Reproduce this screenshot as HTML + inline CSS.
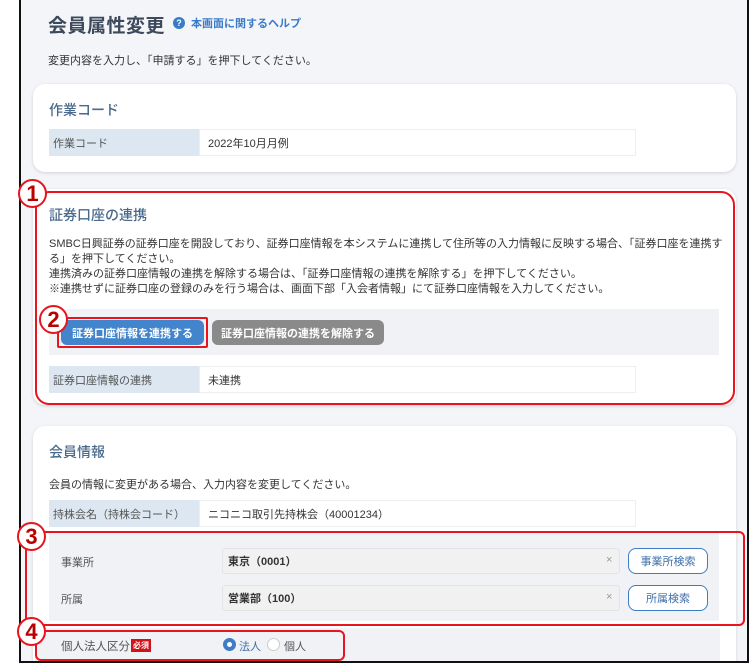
<!DOCTYPE html>
<html><head><meta charset="utf-8"><style>
*{box-sizing:border-box;margin:0;padding:0}
html{width:750px;height:667px;overflow:hidden}
body{width:750px;height:667px;overflow:hidden;background:#fff;font-family:"Liberation Sans","Noto Sans CJK JP",sans-serif;color:#333;position:relative}
.a{position:absolute}
.frame{left:19px;top:-2px;width:730px;height:667px;border:2px solid #111;background:#f4f5f9}
.card{background:#fff;border-radius:12px;box-shadow:0 1px 3px rgba(0,0,0,.15)}
.h{font-size:14px;color:#4a6a8c;font-weight:500}
.t{font-size:11px;color:#333;white-space:nowrap}
.lab{background:#dde7f1;font-size:11px;color:#555;padding-left:4px;display:flex;align-items:center}
.val{background:#fff;border:1px solid #eee;font-size:11px;padding-left:8px;display:flex;align-items:center}
.red{border:2px solid #e8141e}
.num{width:29px;height:29px;border-radius:50%;border:2px solid #e8141e;background:#fff;color:#b00;font-weight:bold;font-size:22px;display:flex;align-items:center;justify-content:center;line-height:1}
.btn{border-radius:6px;color:#fff;font-size:11px;font-weight:bold;display:flex;align-items:center;justify-content:center}
.inp{background:#f1f1f1;border:1px solid #e4e4e4;border-radius:3px;font-size:11px;font-weight:bold;padding-left:5px;display:flex;align-items:center}
.sb{background:#fff;border:1.5px solid #3d7cc6;border-radius:8px;color:#3d6fa8;font-size:11px;display:flex;align-items:center;justify-content:center}
</style></head><body>
<div class="a frame"></div>
<div class="a" style="left:48px;top:11px;font-size:19px;font-weight:bold;color:#3d4a5c;letter-spacing:0.5px">会員属性変更</div>
<div class="a" style="left:173px;top:17px;width:12px;height:12px;border-radius:50%;background:#3a7bc8;color:#fff;font-size:9px;font-weight:bold;text-align:center;line-height:12px">?</div>
<div class="a" style="left:191px;top:15px;font-size:11px;color:#3a7bc8;font-weight:bold">本画面に関するヘルプ</div>
<div class="a t" style="left:48px;top:52px">変更内容を入力し、「申請する」を押下してください。</div>

<div class="a card" style="left:33px;top:84px;width:703px;height:88px"></div>
<div class="a h" style="left:49px;top:100px">作業コード</div>
<div class="a lab" style="left:49px;top:129px;width:150px;height:27px">作業コード</div>
<div class="a val" style="left:199px;top:129px;width:437px;height:27px">2022年10月月例</div>

<div class="a card" style="left:33px;top:189px;width:703px;height:216px"></div>
<div class="a red" style="left:35px;top:191px;width:700px;height:214px;border-radius:14px"></div>
<div class="a h" style="left:49px;top:205px">証券口座の連携</div>
<div class="a t" style="left:49px;top:237px;line-height:15px">SMBC日興証券の証券口座を開設しており、証券口座情報を本システムに連携して住所等の入力情報に反映する場合、「証券口座を連携す<br>る」を押下してください。<br>連携済みの証券口座情報の連携を解除する場合は、「証券口座情報の連携を解除する」を押下してください。<br>※連携せずに証券口座の登録のみを行う場合は、画面下部「入会者情報」にて証券口座情報を入力してください。</div>
<div class="a" style="left:49px;top:309px;width:670px;height:46px;background:#f1f2f6"></div>
<div class="a btn" style="left:61px;top:320px;width:143px;height:25px;background:#4285cc">証券口座情報を連携する</div>
<div class="a red" style="left:57px;top:317px;width:151px;height:31px;border-radius:2px"></div>
<div class="a btn" style="left:212px;top:320px;width:172px;height:25px;background:#8a8a8a">証券口座情報の連携を解除する</div>
<div class="a lab" style="left:49px;top:366px;width:150px;height:27px">証券口座情報の連携</div>
<div class="a val" style="left:199px;top:366px;width:437px;height:27px">未連携</div>

<div class="a card" style="left:33px;top:426px;width:703px;height:236px;border-radius:12px 12px 0 0"></div>
<div class="a h" style="left:49px;top:442px">会員情報</div>
<div class="a t" style="left:49px;top:476px">会員の情報に変更がある場合、入力内容を変更してください。</div>
<div class="a lab" style="left:49px;top:500px;width:150px;height:27px">持株会名（持株会コード）</div>
<div class="a val" style="left:199px;top:500px;width:437px;height:27px">ニコニコ取引先持株会（40001234）</div>
<div class="a" style="left:49px;top:531px;width:670px;height:90px;background:#f1f2f6"></div>
<div class="a t" style="left:61px;top:554px;color:#555">事業所</div>
<div class="a t" style="left:61px;top:591px;color:#555">所属</div>
<div class="a inp" style="left:222px;top:548px;width:398px;height:26px">東京（0001）</div>
<div class="a inp" style="left:222px;top:585px;width:398px;height:26px">営業部（100）</div>
<div class="a t" style="left:606px;top:554px;color:#999">×</div>
<div class="a t" style="left:606px;top:591px;color:#999">×</div>
<div class="a sb" style="left:628px;top:548px;width:80px;height:26px">事業所検索</div>
<div class="a sb" style="left:628px;top:585px;width:80px;height:26px">所属検索</div>
<div class="a red" style="left:25px;top:531px;width:720px;height:95px;border-radius:6px"></div>
<div class="a" style="left:35px;top:628px;width:685px;height:33px;background:#f1f2f6"></div>
<div class="a t" style="left:61px;top:638px;color:#555;font-size:11.5px">個人法人区分</div>
<div class="a" style="left:131px;top:639px;background:#d0121b;color:#fff;font-size:8px;font-weight:bold;padding:1px 2px">必須</div>
<div class="a" style="left:223px;top:638px;width:13px;height:13px;border-radius:50%;border:4px solid #3d7cc6;background:#fff"></div>
<div class="a t" style="left:239px;top:638px;color:#3d6fa8">法人</div>
<div class="a" style="left:267px;top:638px;width:13px;height:13px;border-radius:50%;border:1px solid #ccc;background:#fff"></div>
<div class="a t" style="left:284px;top:638px;color:#555">個人</div>
<div class="a red" style="left:35px;top:630px;width:310px;height:31px;border-radius:6px"></div>
<div class="a" style="left:20px;top:661px;width:728px;height:2px;background:#111"></div>
<div class="a" style="left:0;top:663px;width:750px;height:4px;background:#fff"></div>

<div class="a num" style="left:18px;top:179px">1</div>
<div class="a num" style="left:39px;top:305px">2</div>
<div class="a num" style="left:17px;top:522px">3</div>
<div class="a num" style="left:17px;top:617px">4</div>
</body></html>
